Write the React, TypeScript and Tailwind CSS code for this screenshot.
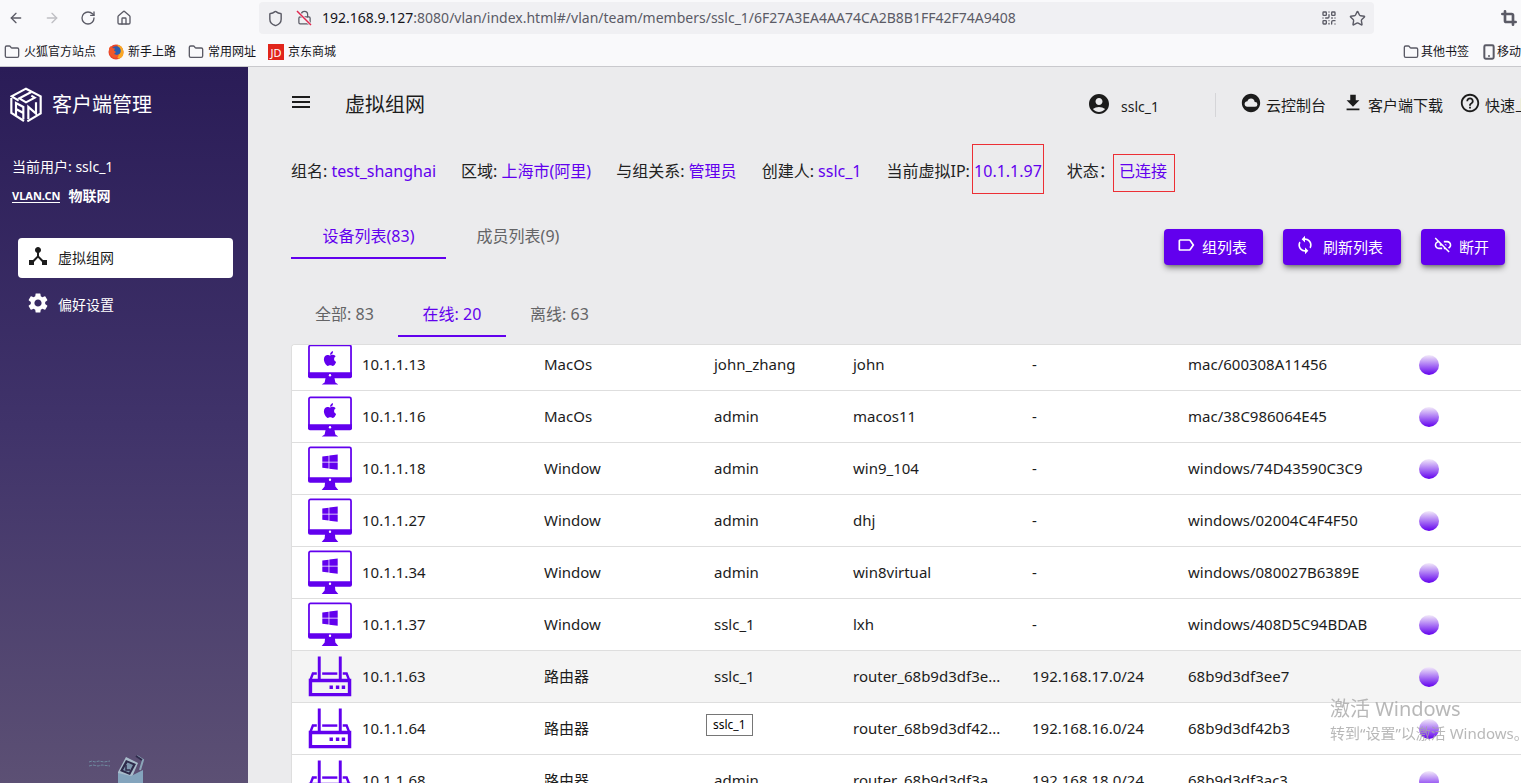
import React from 'react';
import { ArrowLeft, ArrowRight, RotateCw, House, Shield, Lock, Folder, Star, QrCode, Smartphone, Crop } from 'lucide-react';
import { MdMenu, MdAccountCircle, MdCloudCircle, MdGetApp, MdHelpOutline, MdDeviceHub, MdSettings, MdLabelOutline, MdSync, MdLinkOff } from 'react-icons/md';
import { FaApple, FaWindows } from 'react-icons/fa';

type DeviceKind = 'mac' | 'windows' | 'router';

interface Device {
  kind: DeviceKind;
  ip: string;
  owner: string;
  name: string;
  subnet: string;
  hardware: string;
}

const devices: Device[] = [
  { kind: 'mac', ip: '10.1.1.13', owner: 'john_zhang', name: 'john', subnet: '-', hardware: 'mac/600308A11456' },
  { kind: 'mac', ip: '10.1.1.16', owner: 'admin', name: 'macos11', subnet: '-', hardware: 'mac/38C986064E45' },
  { kind: 'windows', ip: '10.1.1.18', owner: 'admin', name: 'win9_104', subnet: '-', hardware: 'windows/74D43590C3C9' },
  { kind: 'windows', ip: '10.1.1.27', owner: 'admin', name: 'dhj', subnet: '-', hardware: 'windows/02004C4F4F50' },
  { kind: 'windows', ip: '10.1.1.34', owner: 'admin', name: 'win8virtual', subnet: '-', hardware: 'windows/080027B6389E' },
  { kind: 'windows', ip: '10.1.1.37', owner: 'sslc_1', name: 'lxh', subnet: '-', hardware: 'windows/408D5C94BDAB' },
  { kind: 'router', ip: '10.1.1.63', owner: 'sslc_1', name: 'router_68b9d3df3e...', subnet: '192.168.17.0/24', hardware: '68b9d3df3ee7' },
  { kind: 'router', ip: '10.1.1.64', owner: 'sslc_1', name: 'router_68b9d3df42...', subnet: '192.168.16.0/24', hardware: '68b9d3df42b3' },
  { kind: 'router', ip: '10.1.1.68', owner: 'admin', name: 'router_68b9d3df3a...', subnet: '192.168.18.0/24', hardware: '68b9d3df3ac3' },
];

const kindLabel: Record<DeviceKind, string> = { mac: 'MacOs', windows: 'Window', router: '路由器' };

const HOVERED_IP = '10.1.1.63';

const DeviceIcon: React.FC<{ kind: DeviceKind }> = ({ kind }) => {
  if (kind === 'router') {
    return (
      <svg width="44" height="42" viewBox="0 0 45 42" fill="none" stroke="#6200ee" className="shrink-0">
        <path d="M11.5 0V24M33 0V24" strokeWidth="3" />
        <path d="M14.5 17.5H30" strokeWidth="2.5" />
        <path d="M2.5 24L5 17.5H9M42 24L39.5 17.5H35.5" strokeWidth="2.5" />
        <path d="M2.5 24.5H42.5V39H2.500Z" strokeWidth="3.5" />
        <path d="M22 31.5H25.5M28.500 31.5H32M34.500 31.5H38" strokeWidth="3.5" />
      </svg>
    );
  }
  const tall = kind === 'windows';
  return (
    <svg width="44" height={tall ? 45 : 41} viewBox={tall ? '0 0 45 45' : '0 0 45 41'} fill="#6200ee" color="#6200ee" className="shrink-0">
      <rect x="1" y="1" width="43" height={tall ? 34 : 32} rx="1.5" fill="none" stroke="#6200ee" strokeWidth="1.8" />
      {tall ? (
        <>
          <path d="M0 31.500H45V35a2 2 0 0 1-2 2H2a2 2 0 0 1-2-2Z" />
          <path d="M17.5 36H27.500L28 41L31 44.500H14L17 41Z" />
          <circle cx="22.500" cy="34" r="1.200" fill="#fff" />
          <FaWindows x="13.500" y="7" size={18} />
        </>
      ) : (
        <>
          <path d="M0 28.500H45V32.500a2 2 0 0 1-2 2H2a2 2 0 0 1-2-2Z" />
          <path d="M18 34H27L28 39L31 41H14L17 39Z" />
          <circle cx="22.500" cy="31.500" r="1.200" fill="#fff" />
          <FaApple x="14" y="6" size={17} />
        </>
      )}
    </svg>
  );
};

const BrandLogo = () => (
  <svg width="32" height="36" viewBox="32 58 96 108" fill="none" stroke="#fff" strokeWidth="6.500">
    <path d="M36 91V136L74 160M84 161L124 137V86L80 63L37 86L58 99" />
    <path d="M96 73L60 92L80 104L106 90L96 84" />
    <path d="M50 143V106L72 118V155M50 124L72 136" />
    <path d="M87 155V118L110 138V104" />
  </svg>
);

const FirefoxLogo = () => (
  <svg width="16" height="16" viewBox="0 0 16 16">
    <circle cx="8" cy="8" r="7.500" fill="#e8452c" />
    <path d="M9 .6a7.500 7.500 0 0 1 2 14.300L8 12l4-3-1-5Z" fill="#f9a825" />
    <circle cx="8.200" cy="6.800" r="4.600" fill="#2b5fb0" />
    <path d="M1 4l2-2 1 2 3 .5-1 2 2 1.500-2 2 3 1 2-1-1 3-4 1-4-3Z" fill="#f2582b" />
  </svg>
);

const Robot = () => (
  <svg width="58" height="28" viewBox="0 0 58 28" className="ml-[88px]" aria-hidden="true">
    <path d="M1 7l3-1 3 1 4-1 5 1 6-1M1 11l4-1 5 1 4-1 8 1" stroke="#6f8aa0" strokeDasharray="3 1" fill="none" />
    <path d="M30 17L38 2L50 8L44 22L30 28Z" fill="#a9bccb" />
    <path d="M32 16L38 5L48 9L42 20Z" fill="#2e2a4a" />
    <path d="M35 15L39.500 7.500L45 10L41 17.500Z" fill="#7f96ae" />
    <path d="M38 10V15H42" stroke="#2e2a4a" strokeWidth="1.500" fill="none" />
    <path d="M30 18L43 21L55 15V28H30Z" fill="#84a4bd" />
    <path d="M49 1L55 5L52 15" stroke="#8ba5b8" strokeWidth="2" fill="none" />
    <path d="M48 1L54 5" stroke="#2e2a4a" strokeWidth="2" />
  </svg>
);

const BrowserBar = () => (
  <div className="shrink-0 border-b border-[#c9c9cd] bg-[#f9f9fb] text-xs text-[#15141a]">
    <div className="flex h-9 items-center text-[#5b5b66]">
      <div className="flex w-[259px] shrink-0 items-center gap-5 pl-2">
        <button aria-label="后退"><ArrowLeft size={16} strokeWidth={2} /></button>
        <button aria-label="前进" className="text-[#bfbfc4]"><ArrowRight size={16} strokeWidth={2} /></button>
        <button aria-label="刷新"><RotateCw size={16} strokeWidth={2} /></button>
        <button aria-label="主页"><House size={16} strokeWidth={2} /></button>
      </div>
      <div className="flex h-8 min-w-0 flex-1 items-center rounded bg-[#f0f0f3] pl-2 pr-2">
        <Shield size={17} strokeWidth={2} className="shrink-0" />
        <svg width="16" height="18" viewBox="0 0 16 18" className="ml-3 shrink-0" fill="none">
          <Lock x="1" y="1" size={15} strokeWidth={2} />
          <path d="M1 2L15 16" stroke="#f0f0f3" strokeWidth="3" />
          <path d="M1 2L15 16" stroke="#e22850" strokeWidth="1.500" />
        </svg>
        <div role="textbox" aria-label="地址" className="ml-2.5 flex-1 truncate text-sm">
          <span className="text-[#15141a]">192.168.9.127</span>:8080/vlan/index.html#/vlan/team/members/sslc_1/6F27A3EA4AA74CA2B8B1FF42F74A9408
        </div>
        <button aria-label="二维码"><QrCode size={16} strokeWidth={2} /></button>
        <button aria-label="收藏" className="ml-3"><Star size={17} strokeWidth={2} /></button>
      </div>
      <div className="flex w-[147px] shrink-0 justify-end pr-1">
        <button aria-label="截图"><Crop size={16} strokeWidth={4} /></button>
      </div>
    </div>
    <div className="flex h-[30px] items-center gap-3 overflow-hidden whitespace-nowrap pl-1 pt-0.5">
      <a href="#" className="flex items-center gap-1"><Folder size={16} strokeWidth={2} className="text-[#5b5b66]" />火狐官方站点</a>
      <a href="#" className="flex items-center gap-1"><FirefoxLogo />新手上路</a>
      <a href="#" className="flex items-center gap-1"><Folder size={16} strokeWidth={2} className="text-[#5b5b66]" />常用网址</a>
      <a href="#" className="flex items-center gap-1">
        <span className="flex size-4 items-center justify-center bg-[#e1251b] text-[11px] leading-none text-white">JD</span>京东商城
      </a>
      <a href="#" className="ml-auto flex items-center gap-0.5"><Folder size={16} strokeWidth={2} className="text-[#5b5b66]" />其他书签</a>
      <a href="#" className="flex w-10 items-center"><Smartphone size={16} strokeWidth={3} className="shrink-0 text-[#5b5b66]" />移动设备上的书签</a>
    </div>
  </div>
);

const Sidebar = () => (
  <aside className="flex w-[248px] shrink-0 flex-col bg-linear-to-b/srgb from-[#2a1c57] via-[#40336a] to-[#5c5074] text-sm text-white">
    <div className="flex h-[76px] items-center gap-2.5 pl-2.5">
      <BrandLogo />
      <h1 className="text-xl">客户端管理</h1>
    </div>
    <div className="mt-3.5 pl-3 leading-5">当前用户: sslc_1</div>
    <div className="mt-[9px] flex items-center gap-2 pl-3 font-bold leading-5">
      <a href="#" className="border-b border-white text-[11px] leading-3">VLAN.CN</a>
      物联网
    </div>
    <nav className="mt-8 flex flex-col gap-[7px] pl-[18px] pr-[15px]">
      <a href="#" className="flex h-10 items-center gap-2 rounded bg-white pl-2 text-[#1c1c1c]">
        <MdDeviceHub size={24} className="mb-1" />虚拟组网
      </a>
      <a href="#" className="flex h-10 items-center gap-2 rounded pl-2">
        <MdSettings size={24} className="mb-1" />偏好设置
      </a>
    </nav>
    <div className="mt-auto"><Robot /></div>
  </aside>
);

const Field: React.FC<{ label: string; children: React.ReactNode }> = ({ label, children }) => (
  <div className="text-[#222]">
    {label} <span className="relative text-[#6200ee]">{children}</span>
  </div>
);

export default function App() {
  return (
    <div className="flex h-screen flex-col overflow-hidden bg-[#ebebed] font-['Noto_Sans','Noto_Sans_CJK_SC',sans-serif] text-[#1c1c1c]">
      <BrowserBar />
      <div className="flex min-h-0 flex-1">
        <Sidebar />
        <main className="flex min-w-0 flex-1 flex-col">
          {/* Top bar */}
          <header className="flex h-[76px] shrink-0 items-center whitespace-nowrap pl-[41px] text-[15px]">
            <button aria-label="菜单" className="mb-1.5"><MdMenu size={24} /></button>
            <h2 className="ml-8 text-xl">虚拟组网</h2>
            <div className="-mr-6 ml-auto flex items-center">
              <MdAccountCircle size={24} className="mb-0.5" />
              <span className="ml-2.5 mt-1 text-sm">sslc_1</span>
              <div className="ml-14 mr-6 h-6 w-px bg-[#d5d5d8]" />
              <div className="flex gap-4">
                <a href="#" className="flex items-center gap-1"><MdCloudCircle size={22} className="mb-1" />云控制台</a>
                <a href="#" className="flex items-center gap-1"><MdGetApp size={22} className="mb-1" />客户端下载</a>
                <a href="#" className="flex items-center gap-1"><MdHelpOutline size={22} className="mb-1" />快速上手</a>
              </div>
            </div>
          </header>

          {/* Group info */}
          <div className="flex h-14 shrink-0 items-center gap-[25px] whitespace-nowrap pl-[43px] leading-6">
            <Field label="组名:">test_shanghai</Field>
            <Field label="区域:">上海市(阿里)</Field>
            <Field label="与组关系:">管理员</Field>
            <Field label="创建人:">sslc_1</Field>
            <Field label="当前虚拟IP:">
              10.1.1.97
              <span className="absolute -bottom-3 -left-0.5 -right-0.5 -top-4 border border-[#ec2f35]" />
            </Field>
            <Field label="状态：">
              已连接
              <span className="absolute -bottom-2.5 -left-1.5 -right-2 -top-1.5 border border-[#ec2f35]" />
            </Field>
          </div>

          {/* List tabs and actions */}
          <div className="mt-3 flex shrink-0 items-start justify-between pl-[43px] pr-4 text-[15px]">
            <div role="tablist" className="flex h-12 text-base">
              <button role="tab" aria-selected="true" className="w-[155px] border-b-2 border-[#6200ee] pt-1 text-[#6200ee]">设备列表(83)</button>
              <button role="tab" aria-selected="false" className="w-36 border-b-2 border-transparent pt-1 text-[#646466]">成员列表(9)</button>
            </div>
            <div className="mt-[18px] flex gap-5 text-white">
              <button className="flex h-9 items-center gap-1.5 rounded bg-[#6200ee] pl-3 pr-4 shadow-md shadow-black/40"><MdLabelOutline size={20} className="mb-1" />组列表</button>
              <button className="flex h-9 items-center gap-2 rounded bg-[#6200ee] pl-3 pr-[18px] shadow-md shadow-black/40"><MdSync size={20} className="mb-1" />刷新列表</button>
              <button className="flex h-9 items-center gap-1.5 rounded bg-[#6200ee] pl-3 pr-4 shadow-md shadow-black/40"><MdLinkOff size={20} className="mb-1" />断开</button>
            </div>
          </div>

          {/* Status filter */}
          <div role="tablist" className="mt-6 flex h-12 shrink-0 pl-[43px] text-base text-[#646466]">
            <button role="tab" aria-selected="false" className="w-[107px] border-b-2 border-transparent pt-1">全部: 83</button>
            <button role="tab" aria-selected="true" className="w-[108px] border-b-2 border-[#6200ee] pt-1 text-[#6200ee]">在线: 20</button>
            <button role="tab" aria-selected="false" className="w-[107px] border-b-2 border-transparent pt-1">离线: 63</button>
          </div>

          {/* Device table, scrolled a little past its first row */}
          <div className="ml-[43px] mt-[7px] min-h-0 flex-1 overflow-hidden rounded-tl border-l border-t border-[#dedede] bg-white">
            <table className="-mt-1.5 w-full table-fixed border-separate border-spacing-0 whitespace-nowrap text-[15px]">
              <colgroup>
                <col className="w-[236px]" />
                <col className="w-[170px]" />
                <col className="w-[139px]" />
                <col className="w-[179px]" />
                <col className="w-[156px]" />
                <col className="w-[231px]" />
                <col />
              </colgroup>
              <tbody>
                {devices.map((d) => (
                  <tr key={d.ip} className={d.ip === HOVERED_IP ? 'bg-[#f4f4f4]' : 'bg-white'}>
                    <td className="h-13 border-b border-[#dedede] p-0 pl-4">
                      <div className="flex items-center gap-2.5"><DeviceIcon kind={d.kind} />{d.ip}</div>
                    </td>
                    <td className="border-b border-[#dedede] px-4 py-0">{kindLabel[d.kind]}</td>
                    <td className="relative border-b border-[#dedede] px-4 py-0">
                      {d.owner}
                      {d.ip === HOVERED_IP && (
                        <span role="tooltip" className="absolute left-2 top-[63px] z-10 border border-[#767676] bg-white px-1.5 text-xs leading-5 text-black">{d.owner}</span>
                      )}
                    </td>
                    <td className="border-b border-[#dedede] px-4 py-0">{d.name}</td>
                    <td className="border-b border-[#dedede] px-4 py-0">{d.subnet}</td>
                    <td className="border-b border-[#dedede] px-4 py-0">{d.hardware}</td>
                    <td className="border-b border-[#dedede] px-4 py-0">
                      <div className="size-5 rounded-full bg-linear-to-b/srgb from-[#f3ebfa] to-[#6200ee]" />
                    </td>
                  </tr>
                ))}
              </tbody>
            </table>
          </div>
        </main>
      </div>

      {/* Windows activation notice */}
      <div className="pointer-events-none fixed bottom-[38px] right-0 w-[191px] overflow-hidden whitespace-nowrap text-[#a6a6a6]/80">
        <div className="text-xl leading-6">激活 Windows</div>
        <div className="text-[15px] leading-6">转到“设置”以激活 Windows。</div>
      </div>
    </div>
  );
}
